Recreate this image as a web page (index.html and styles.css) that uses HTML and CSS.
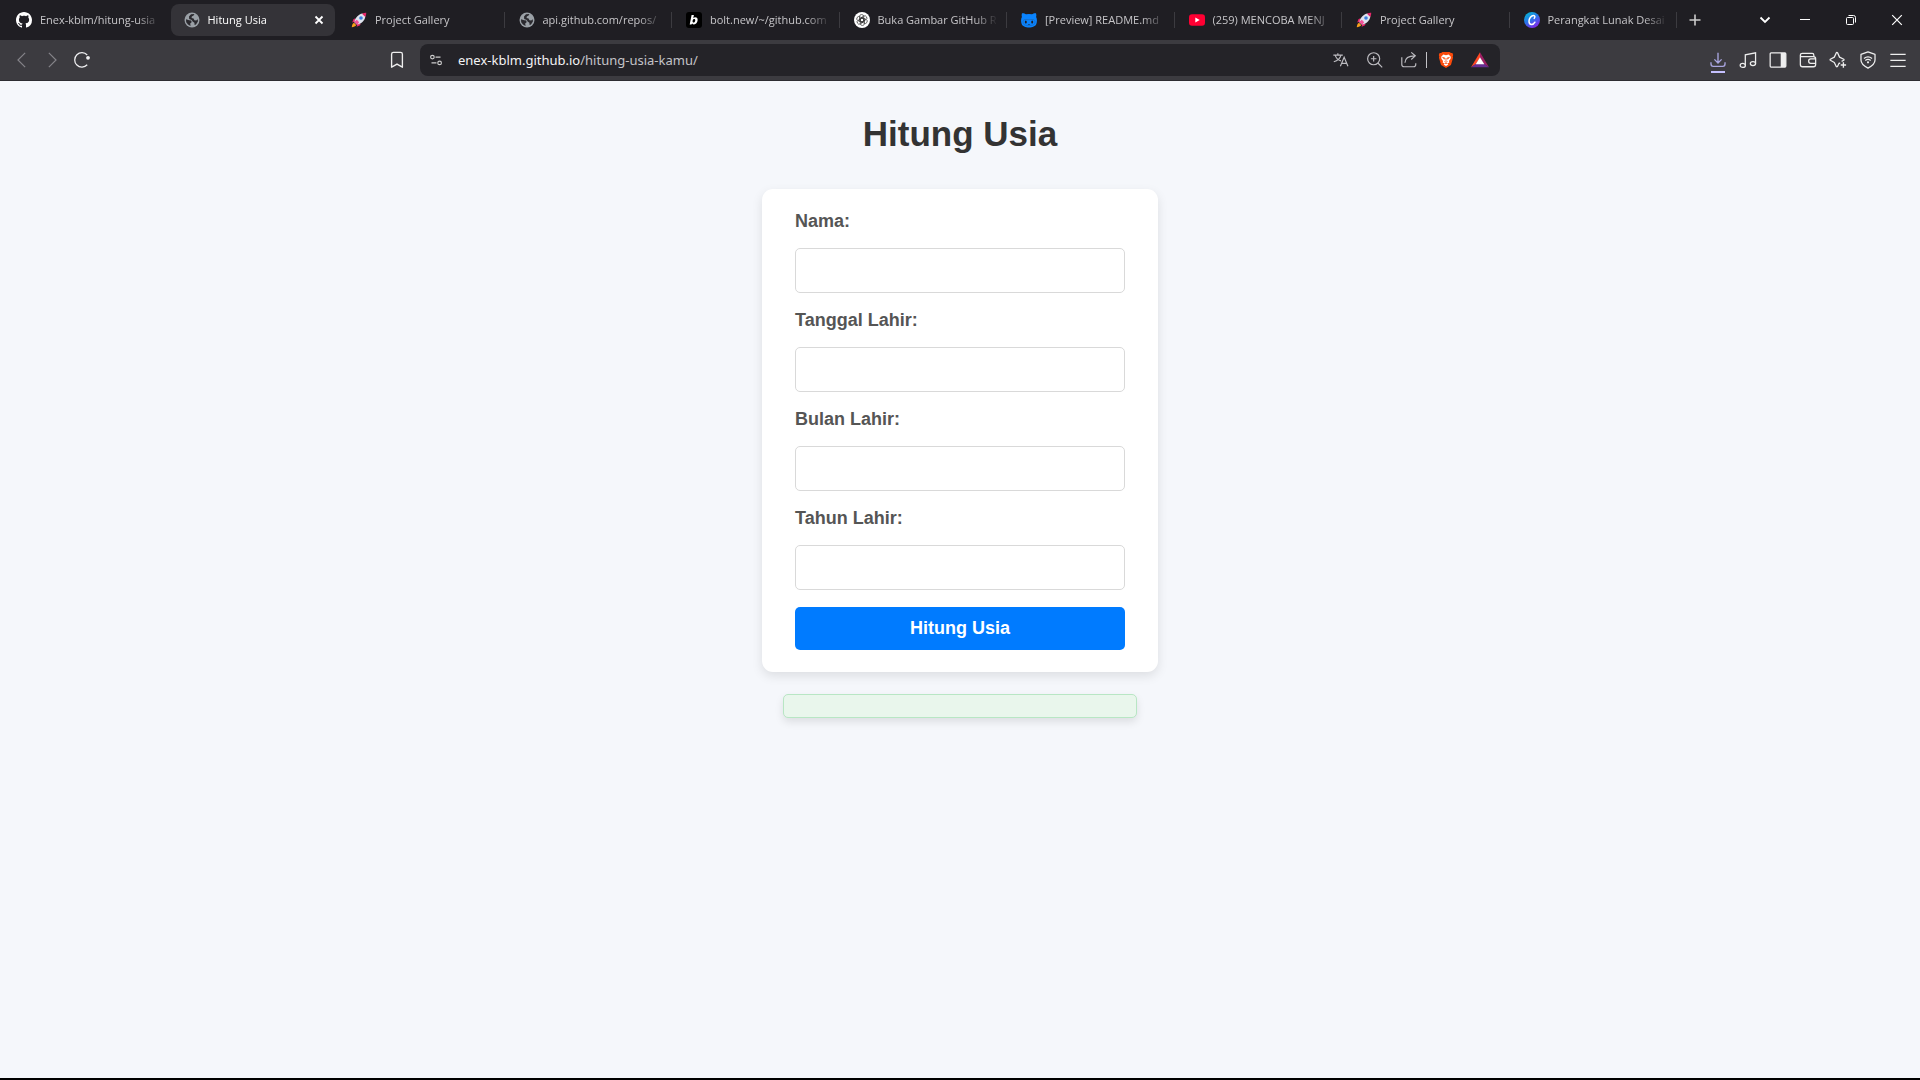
FILE: index.html
```html
<!DOCTYPE html>
<html lang="id">
<head>
<meta charset="utf-8">
<meta name="viewport" content="width=device-width, initial-scale=1">
<title>Hitung Usia</title>
<link rel="stylesheet" href="styles.css">
</head>
<body>
<svg class="sprite" aria-hidden="true">
  <symbol id="globe" viewBox="0 0 16 16">
    <circle cx="8" cy="8" r="7.5" fill="#9aa0a6"/>
    <path d="M2 7.2 5.2 8.3 7.3 8.6 7.6 10.3 6.2 11.4 6.6 13.9 4 12.6 2.2 10.2zM7 2.2 10.4 2 9.6 3.6 7.8 4.4 7.6 6 9.6 6.6 10.4 8.2 12.2 8.6 13.8 7.2 13.9 9.4 12 12.4 10.6 13 10.4 10.8 8.6 9.6 7.8 8 5.2 7 5 4.6z" fill="#2b2a2f"/>
  </symbol>
  <symbol id="rocket" viewBox="0 0 16 16">
    <path d="M4.3 6.2 2.4 7.3 1.2 10.4 4 9.6zM9.8 11.7 8.7 13.6 5.6 14.8 6.4 12z" fill="#e6286b"/>
    <path d="M3 10.8C1.4 11.4 1 13.4.8 15.2 2.6 15 4.6 14.6 5.2 13z" fill="#f9a01b"/>
    <path d="M3.4 10.2C4 6 7.4 2.2 11.6 1.6L14.4 4.4C13.8 8.6 10 12 5.8 12.6z" fill="#dfe3ee"/>
    <path d="M11 1.7C12.6.9 14 .8 15.2.8 15.2 2 15.1 3.4 14.3 5z" fill="#e6286b"/>
    <path d="M3.1 9.9 6.1 12.9 8.2 10.2 5.8 7.8z" fill="#f2549a"/>
    <circle cx="10" cy="6" r="1.8" fill="#3c7fe0"/>
  </symbol>
</svg>

<header class="browser">
  <div class="strip">
    <nav class="tabs" aria-label="Tab">
      <a class="tab" href="#"><svg class="favicon" viewBox="0 0 16 16"><path fill="#fff" d="M8 0C3.58 0 0 3.58 0 8c0 3.54 2.29 6.53 5.47 7.59.4.07.55-.17.55-.38 0-.19-.01-.82-.01-1.49-2.01.37-2.53-.49-2.69-.94-.09-.23-.48-.94-.82-1.13-.28-.15-.68-.52-.01-.53.63-.01 1.08.58 1.23.82.72 1.21 1.87.87 2.33.66.07-.52.28-.87.51-1.07-1.78-.2-3.64-.89-3.64-3.95 0-.87.31-1.59.82-2.15-.08-.2-.36-1.02.08-2.12 0 0 .67-.21 2.2.82.64-.18 1.32-.27 2-.27s1.36.09 2 .27c1.53-1.04 2.2-.82 2.2-.82.44 1.1.16 1.92.08 2.12.51.56.82 1.27.82 2.15 0 3.07-1.87 3.75-3.65 3.95.29.25.54.73.54 1.48 0 1.07-.01 1.93-.01 2.2 0 .21.15.46.55.38A8.01 8.01 0 0 0 16 8c0-4.42-3.58-8-8-8z"/></svg><span class="tab-title">Enex-kblm/hitung-usia</span></a>
      <div class="tab tab-active"><svg class="favicon"><use href="#globe"/></svg><span class="tab-title">Hitung Usia</span><button class="tab-close" type="button" aria-label="Tutup tab"><svg viewBox="0 0 16 16"><path d="M4.500 4.500l7 7M11.500 4.500l-7 7" stroke="#fff" stroke-width="1.800"/></svg></button></div>
      <a class="tab divided" href="#"><svg class="favicon"><use href="#rocket"/></svg><span class="tab-title">Project Gallery</span></a>
      <a class="tab divided" href="#"><svg class="favicon"><use href="#globe"/></svg><span class="tab-title">api.github.com/repos/</span></a>
      <a class="tab divided" href="#"><svg class="favicon" viewBox="0 0 16 16"><rect width="16" height="16" rx="3" fill="#000"/><path fill="#fff" fill-rule="evenodd" d="M5.6 3h2.3L7.3 6c.6-.5 1.2-.7 1.9-.7 1.7 0 2.7 1.2 2.4 3.2-.3 2.300-1.700 3.900-3.600 3.900-.8 0-1.400-.3-1.800-.9L5.400 12.400H3.700zM8.200 7c-.8 0-1.400.6-1.600 1.700-.2 1.100.2 1.800 1 1.800s1.400-.7 1.600-1.800C9.400 7.600 9 7 8.200 7z"/></svg><span class="tab-title">bolt.new/~/github.com</span></a>
      <a class="tab divided" href="#"><svg class="favicon" viewBox="0 0 16 16"><circle cx="8" cy="8" r="8" fill="#fff"/><g fill="none" stroke="#333" stroke-width=".7"><rect x="5.500" y="2.500" width="4.200" height="7.500" rx="2.100"/><rect x="5.500" y="2.500" width="4.200" height="7.500" rx="2.100" transform="rotate(60 8 8)"/><rect x="5.500" y="2.500" width="4.200" height="7.500" rx="2.100" transform="rotate(120 8 8)"/><rect x="5.500" y="2.500" width="4.200" height="7.500" rx="2.100" transform="rotate(180 8 8)"/><rect x="5.500" y="2.500" width="4.200" height="7.500" rx="2.100" transform="rotate(240 8 8)"/><rect x="5.500" y="2.500" width="4.200" height="7.500" rx="2.100" transform="rotate(300 8 8)"/></g></svg><span class="tab-title">Buka Gambar GitHub R</span></a>
      <a class="tab divided" href="#"><svg class="favicon" viewBox="0 0 16 16"><path fill="#0a84ff" d="M1 1.200C2.400.9 4 1.600 5 2.300q3-.6 6 0C12 1.600 13.600.9 15 1.200c.5 1.600.4 2.900.1 3.700 1.100 1.700 1 5 .3 6.800C14.600 14.400 11.500 15.400 8 15.400S1.400 14.400 .6 11.700C-.1 9.900-.2 6.600 .9 4.900.6 4.100.5 2.800 1 1.200z"/><g fill="#1f1e23"><ellipse cx="4.800" cy="10" rx="1" ry="1.500"/><ellipse cx="11.200" cy="10" rx="1" ry="1.500"/><path d="M6.500 12.200h3l-1.500.9z"/></g><path d="M5 7.500q3 .5 6 0c3-.3 3.500 2 2.600 4.100-.8 1.700-3.100 2-5.600 2s-4.800-.3-5.600-2C1.500 9.500 2 7.200 5 7.500z" fill="none" stroke="#1569bd" stroke-width=".7"/></svg><span class="tab-title">[Preview] README.md</span></a>
      <a class="tab divided" href="#"><svg class="favicon" viewBox="0 0 16 16"><rect y="2.300" width="16" height="11.400" rx="3" fill="#ff0033"/><path d="M6.300 5.500v5l4.400-2.500z" fill="#fff"/></svg><span class="tab-title">(259) MENCOBA MENJ</span></a>
      <a class="tab divided" href="#"><svg class="favicon"><use href="#rocket"/></svg><span class="tab-title">Project Gallery</span></a>
      <a class="tab divided" href="#"><svg class="favicon" viewBox="0 0 16 16"><defs><linearGradient id="canva" x1="0" y1="0" x2=".6" y2="1"><stop offset="0" stop-color="#00c4cc"/><stop offset=".5" stop-color="#247bea"/><stop offset="1" stop-color="#7d2ae8"/></linearGradient></defs><circle cx="8" cy="8" r="8" fill="url(#canva)"/><path d="M10.200 6.400c1-1.300.9-3-.6-3C7.200 3.400 5 6.500 5 9.300c0 1.900.9 3.200 2.500 3.200 1.500 0 2.700-1 3.400-2.300" fill="none" stroke="#fff" stroke-width="1.500" stroke-linecap="round"/></svg><span class="tab-title">Perangkat Lunak Desai</span></a>
    </nav>
    <button class="tool new-tab" type="button" aria-label="Tab baru"><svg viewBox="0 0 20 20"><path d="M10 4.500v11M4.500 10h11" stroke="#ccc" stroke-width="1.600"/></svg></button>
    <button class="tool search-tabs" type="button" aria-label="Cari tab"><svg viewBox="0 0 20 20"><path d="M5.500 7.500l4.500 4.500 4.500-4.500" stroke="#fff" stroke-width="1.800"/></svg></button>
    <div class="window-controls">
      <button class="tool" type="button" aria-label="Kecilkan"><svg viewBox="0 0 20 20"><path d="M5 9.500h10" stroke="#fff"/></svg></button>
      <button class="tool" type="button" aria-label="Pulihkan"><svg viewBox="0 0 20 20"><rect x="5.500" y="7.500" width="7" height="7" rx="1" stroke="#fff"/><path d="M7.500 5.500h5q2 0 2 2v5" stroke="#fff"/></svg></button>
      <button class="tool" type="button" aria-label="Tutup"><svg viewBox="0 0 20 20"><path d="M5.200 5.200l9.600 9.600M14.800 5.200l-9.600 9.600" stroke="#fff" stroke-width="1.200"/></svg></button>
    </div>
  </div>

  <div class="toolbar">
    <div class="navigation">
      <button class="tool" type="button" aria-label="Kembali"><svg viewBox="0 0 20 20"><path d="M13.500 2l-8 8 8 8" stroke="#858489" stroke-width="1.300"/></svg></button>
      <button class="tool" type="button" aria-label="Maju"><svg viewBox="0 0 20 20"><path d="M6.500 2l8 8-8 8" stroke="#858489" stroke-width="1.300"/></svg></button>
      <button class="tool" type="button" aria-label="Muat ulang"><svg viewBox="0 0 20 20"><path d="M15.800 15.300A8 8 0 1 1 15.800 4.500" stroke="#f0f0f2" stroke-width="1.400"/><circle cx="16.700" cy="7.600" r="2.100" fill="#f0f0f2"/></svg></button>
      <button class="tool bookmark" type="button" aria-label="Markah"><svg viewBox="0 0 20 20"><path d="M4 18V3.500q0-2 2-2h8q2 0 2 2V18l-6-3.500z" stroke="#eee" stroke-width="1.500" stroke-linejoin="round"/></svg></button>
    </div>
    <div class="address">
      <button class="tool site-info" type="button" aria-label="Info situs"><svg viewBox="0 0 20 20"><g stroke="#ccc" stroke-width="1.300"><circle cx="6" cy="6.800" r="2"/><path d="M9.500 6.800H15M5 13.200h5.500"/><circle cx="14" cy="13.200" r="2"/></g></svg></button>
      <a class="url" href="#"><span class="host">enex-kblm.github.io</span>/hitung-usia-kamu/</a>
      <button class="tool" type="button" aria-label="Terjemahkan"><svg viewBox="0 0 20 20"><g stroke="#bdbcc1" stroke-width="1.300"><path d="M1.500 4.500h10.500M6.500 2.500v2M3.500 4.500q1.500 5 6.500 6.500M10 4.500Q8.500 10 2 12"/><path d="M9.300 17 13.500 7l4.200 10M10.800 13.800h5.500"/></g></svg></button>
      <button class="tool" type="button" aria-label="Perbesar"><svg viewBox="0 0 20 20"><g stroke="#bdbcc1" stroke-width="1.300"><circle cx="8.500" cy="8.600" r="6.700"/><path d="M8.500 5.500v6.200M5.400 8.600h6.200M13.200 13.300l4.800 4.800"/></g></svg></button>
      <button class="tool" type="button" aria-label="Bagikan"><svg viewBox="0 0 20 20"><path d="M2 7v8q0 2.500 2.500 2.500h10.500q2.500 0 2.500-2.500v-1.500M5.500 13q.3-7.600 11-7.600M12.500 1.500l4.500 3.900-4.500 4.100" stroke="#bdbcc1" stroke-width="1.300"/></svg></button>
      <span class="separator"></span>
      <button class="tool" type="button" aria-label="Brave Shields"><svg viewBox="0 0 20 20"><path d="M6 1h8l1.500 1.300 1.600-.1.900 2.300-.5 1.500.3 1.500-2.300 8L10 19l-5.500-3.500-2.300-8L2.500 6 2 4.500l.9-2.300 1.600.1z" fill="#fb4a0b"/><path d="M7 4l3 .6L13 4l2.300 2.500-.2 2-1.800 2.700.4 1.700-2.200 1 1.100 1.100L10 16.700 7.400 15l1.100-1.100-2.200-1 .4-1.700-1.800-2.700-.2-2z" fill="#fff"/><path d="M6.200 7.200l2.600.6-.5 1.200zM13.800 7.200l-2.600.6.5 1.200zM10 8v3M8.300 11.600l1.700.9 1.700-.9M8.600 13.800h2.800" stroke="#fb4a0b" stroke-width=".9"/></svg></button>
      <button class="tool" type="button" aria-label="Brave Rewards"><svg viewBox="0 0 20 20"><path d="M10 1.500v6L5.500 14.500 0 18z" fill="#ff4724"/><path d="M10 1.500L20 18l-5.500-3.500L10 7.500z" fill="#9e1f63"/><path d="M0 18l5.500-3.800h9L20 18z" fill="#662d91"/><path d="M10 7l4.800 7.800H5.200z" fill="#fff"/></svg></button>
    </div>
    <div class="extras">
      <button class="tool" type="button" aria-label="Unduhan"><svg viewBox="0 0 20 20"><path d="M10 2v11M6 9.300l4 4 4-4M2.200 12.500v1.700q0 2.800 2.500 2.800h10.600q2.500 0 2.500-2.800v-1.700" stroke="#a9a5e0" stroke-width="1.500"/></svg><span class="download-mark"></span></button>
      <button class="tool" type="button" aria-label="Media"><svg viewBox="0 0 20 20"><g stroke="#eee" stroke-width="1.400"><ellipse cx="4.200" cy="16" rx="2.900" ry="2.200"/><ellipse cx="15.500" cy="14" rx="2.900" ry="2.200"/><path d="M7 16V4.300l11.400-2.300v12"/></g></svg></button>
      <button class="tool" type="button" aria-label="Panel samping"><svg viewBox="0 0 20 20"><rect x="1.300" y="2.200" width="17.400" height="15.600" rx="1" stroke="#eee" stroke-width="1.400"/><path d="M13 2.200h5.700v15.600H13z" fill="#eee"/></svg></button>
      <button class="tool" type="button" aria-label="Dompet"><svg viewBox="0 0 20 20"><path d="M1.500 4.500v10.500q0 2.500 2.500 2.500h12q2.500 0 2.500-2.500V8.700q0-2.500-2.500-2.500H3.500Q1.500 6.200 1.500 4.500T3.700 2.700h11q1.800 0 1.800 2v1.500M18.500 8.700h-5.500q-2.300 0-2.300 2.500t2.300 2.500h5.500" stroke="#eee" stroke-width="1.400"/></svg></button>
      <button class="tool" type="button" aria-label="Leo AI"><svg viewBox="0 0 20 20"><path d="M12.500 13.800l-1.200-.4-2 4q-.6.600-1.100 0L5.900 12.700 1.500 10.300q-.6-.5 0-1.100l4.400-2.400L8.300 1.700q.6-.6 1.100 0l2.300 5.100 4.700 2.400q.6.600 0 1.100L14 11.500" stroke="#eee" stroke-width="1.400" stroke-linejoin="round"/><path d="M16 12.500v6M13 15.500h6" stroke="#eee" stroke-width="1.500"/></svg></button>
      <button class="tool" type="button" aria-label="VPN"><svg viewBox="0 0 20 20"><g stroke="#eee" stroke-width="1.400"><path d="M10 1l7.800 2.800v6.300q0 5-7.800 8.900-7.800-3.900-7.800-8.900V3.800z" stroke-linejoin="round"/><path d="M5.500 8.200q4.500-3.500 9 0M7 10.500q3-2.200 6 0"/></g><circle cx="10" cy="12.600" r="1.200" fill="#eee"/></svg></button>
      <button class="tool" type="button" aria-label="Menu"><svg viewBox="0 0 20 20"><path d="M1.500 3.800h17M1.500 10.500h17M1.500 17h17" stroke="#eee" stroke-width="1.400"/></svg></button>
    </div>
  </div>
</header>

<main class="page">
  <h1 class="title">Hitung Usia</h1>
  <form class="card">
    <label class="label" for="nama">Nama:</label>
    <input class="field" id="nama" type="text">
    <label class="label" for="tanggal">Tanggal Lahir:</label>
    <input class="field" id="tanggal" type="number">
    <label class="label" for="bulan">Bulan Lahir:</label>
    <input class="field" id="bulan" type="number">
    <label class="label" for="tahun">Tahun Lahir:</label>
    <input class="field" id="tahun" type="number">
    <button class="submit" type="button">Hitung Usia</button>
  </form>
  <div class="result" role="status"></div>
</main>
</body>
</html>
```
FILE: styles.css
```css
* {
  box-sizing: border-box;
}

body {
  margin: 0;
  min-height: 100vh;
  display: flex;
  flex-direction: column;
  background: #f5f7fb;
  border-bottom: 2px solid #000;
  font-family: "Liberation Sans", Arial, sans-serif;
}

.sprite {
  display: none;
}

/* Browser frame */
.browser {
  font-family: "Open Sans", "Noto Sans", sans-serif;
}

.strip {
  display: flex;
  height: 40px;
  background: #1f1e23;
}

.tabs {
  flex: 1;
  min-width: 0;
  display: grid;
  grid-template-columns: repeat(10, minmax(0, 1fr));
  padding-left: 2px;
}

.tab {
  position: relative;
  display: flex;
  align-items: center;
  gap: 8px;
  padding: 0 9px 0 14px;
  color: #c6c5c8;
  font-size: 11px;
  line-height: 16px;
  text-decoration: none;
}

.tab-active {
  margin: 4px 2px 4px 1px;
  padding: 0 8px 0 13px;
  border-radius: 8px;
  background: #343338;
  color: #fff;
}

.divided::after {
  content: "";
  position: absolute;
  right: 0;
  top: 12px;
  width: 1px;
  height: 16px;
  background: #3c3b40;
}

.favicon {
  flex: none;
  width: 16px;
  height: 16px;
}

.tab-title {
  flex: 1;
  min-width: 0;
  overflow: hidden;
  white-space: nowrap;
  mask-image: linear-gradient(to left, transparent, #000 24px);
}

.tab-close {
  width: 16px;
  height: 16px;
  padding: 0;
  border: 0;
  background: none;
}

.tab-close svg {
  display: block;
}

.tool {
  position: relative;
  flex: none;
  display: flex;
  align-items: center;
  justify-content: center;
  width: 30px;
  height: 32px;
  padding: 0;
  border: 0;
  background: none;
}

.tool svg {
  width: 18px;
  height: 18px;
  fill: none;
}

.strip .tool {
  height: 40px;
}

.strip .tool svg {
  width: 20px;
  height: 20px;
}

.strip .new-tab {
  width: 36px;
}

.strip .search-tabs {
  width: 34px;
  margin-left: 35px;
}

.window-controls {
  display: flex;
}

.window-controls .tool {
  width: 46px;
}

.toolbar {
  display: grid;
  grid-template-columns: 1fr minmax(0, 1080px) 1fr;
  align-items: center;
  padding: 4px 0;
  background: #3c3b40;
  border-bottom: 1px solid #2d2c31;
}

.navigation {
  display: flex;
  padding: 0 8px 0 7px;
}

.bookmark {
  margin-left: auto;
}

.address {
  display: flex;
  align-items: center;
  padding-right: 3px;
  border-radius: 8px;
  background: #242328;
}

.address .tool {
  width: 34px;
}

.address .site-info {
  width: 32px;
  margin-right: 6px;
}

.url {
  flex: 1;
  min-width: 0;
  color: #c4c3c8;
  font-family: "Noto Sans", sans-serif;
  font-size: 13px;
  line-height: 20px;
  text-decoration: none;
}

.host {
  color: #f3f3f5;
}

.separator {
  width: 1px;
  height: 16px;
  margin-right: 2px;
  background: #c4c3c8;
}

.extras {
  display: flex;
  justify-content: flex-end;
  padding-right: 7px;
}

.download-mark {
  position: absolute;
  left: 8px;
  bottom: 3px;
  width: 14px;
  height: 2px;
  background: #c5c0ff;
}

/* Age calculator */
.page {
  flex: 1;
  display: flex;
  flex-direction: column;
  align-items: center;
  padding: 33px 16px;
}

.title {
  margin: 0 0 35px;
  color: #333;
  font-size: 35px;
  line-height: 40px;
}

.card {
  display: flex;
  flex-direction: column;
  gap: 17px;
  width: 100%;
  max-width: 396px;
  padding: 22px 33px;
  border-radius: 11px;
  background: #fff;
  box-shadow: 0 4px 11px rgba(0, 0, 0, 0.1);
}

.label {
  color: #555;
  font-size: 18px;
  font-weight: bold;
  line-height: 20px;
}

.field {
  width: 100%;
  height: 45px;
  padding: 11px;
  border: 1px solid #d9d9d9;
  border-radius: 5px;
  background: #fff;
  font: inherit;
  font-size: 18px;
}

.submit {
  height: 43px;
  border: 0;
  border-radius: 5px;
  background: #007bff;
  color: #fff;
  font: inherit;
  font-size: 18px;
  font-weight: bold;
}

.result {
  width: 100%;
  max-width: 354px;
  min-height: 24px;
  margin-top: 22px;
  padding: 11px;
  border: 1px solid #b8e6c4;
  border-radius: 5px;
  background: #e9f6ec;
  box-shadow: 0 4px 9px rgba(0, 0, 0, 0.1);
}
```
